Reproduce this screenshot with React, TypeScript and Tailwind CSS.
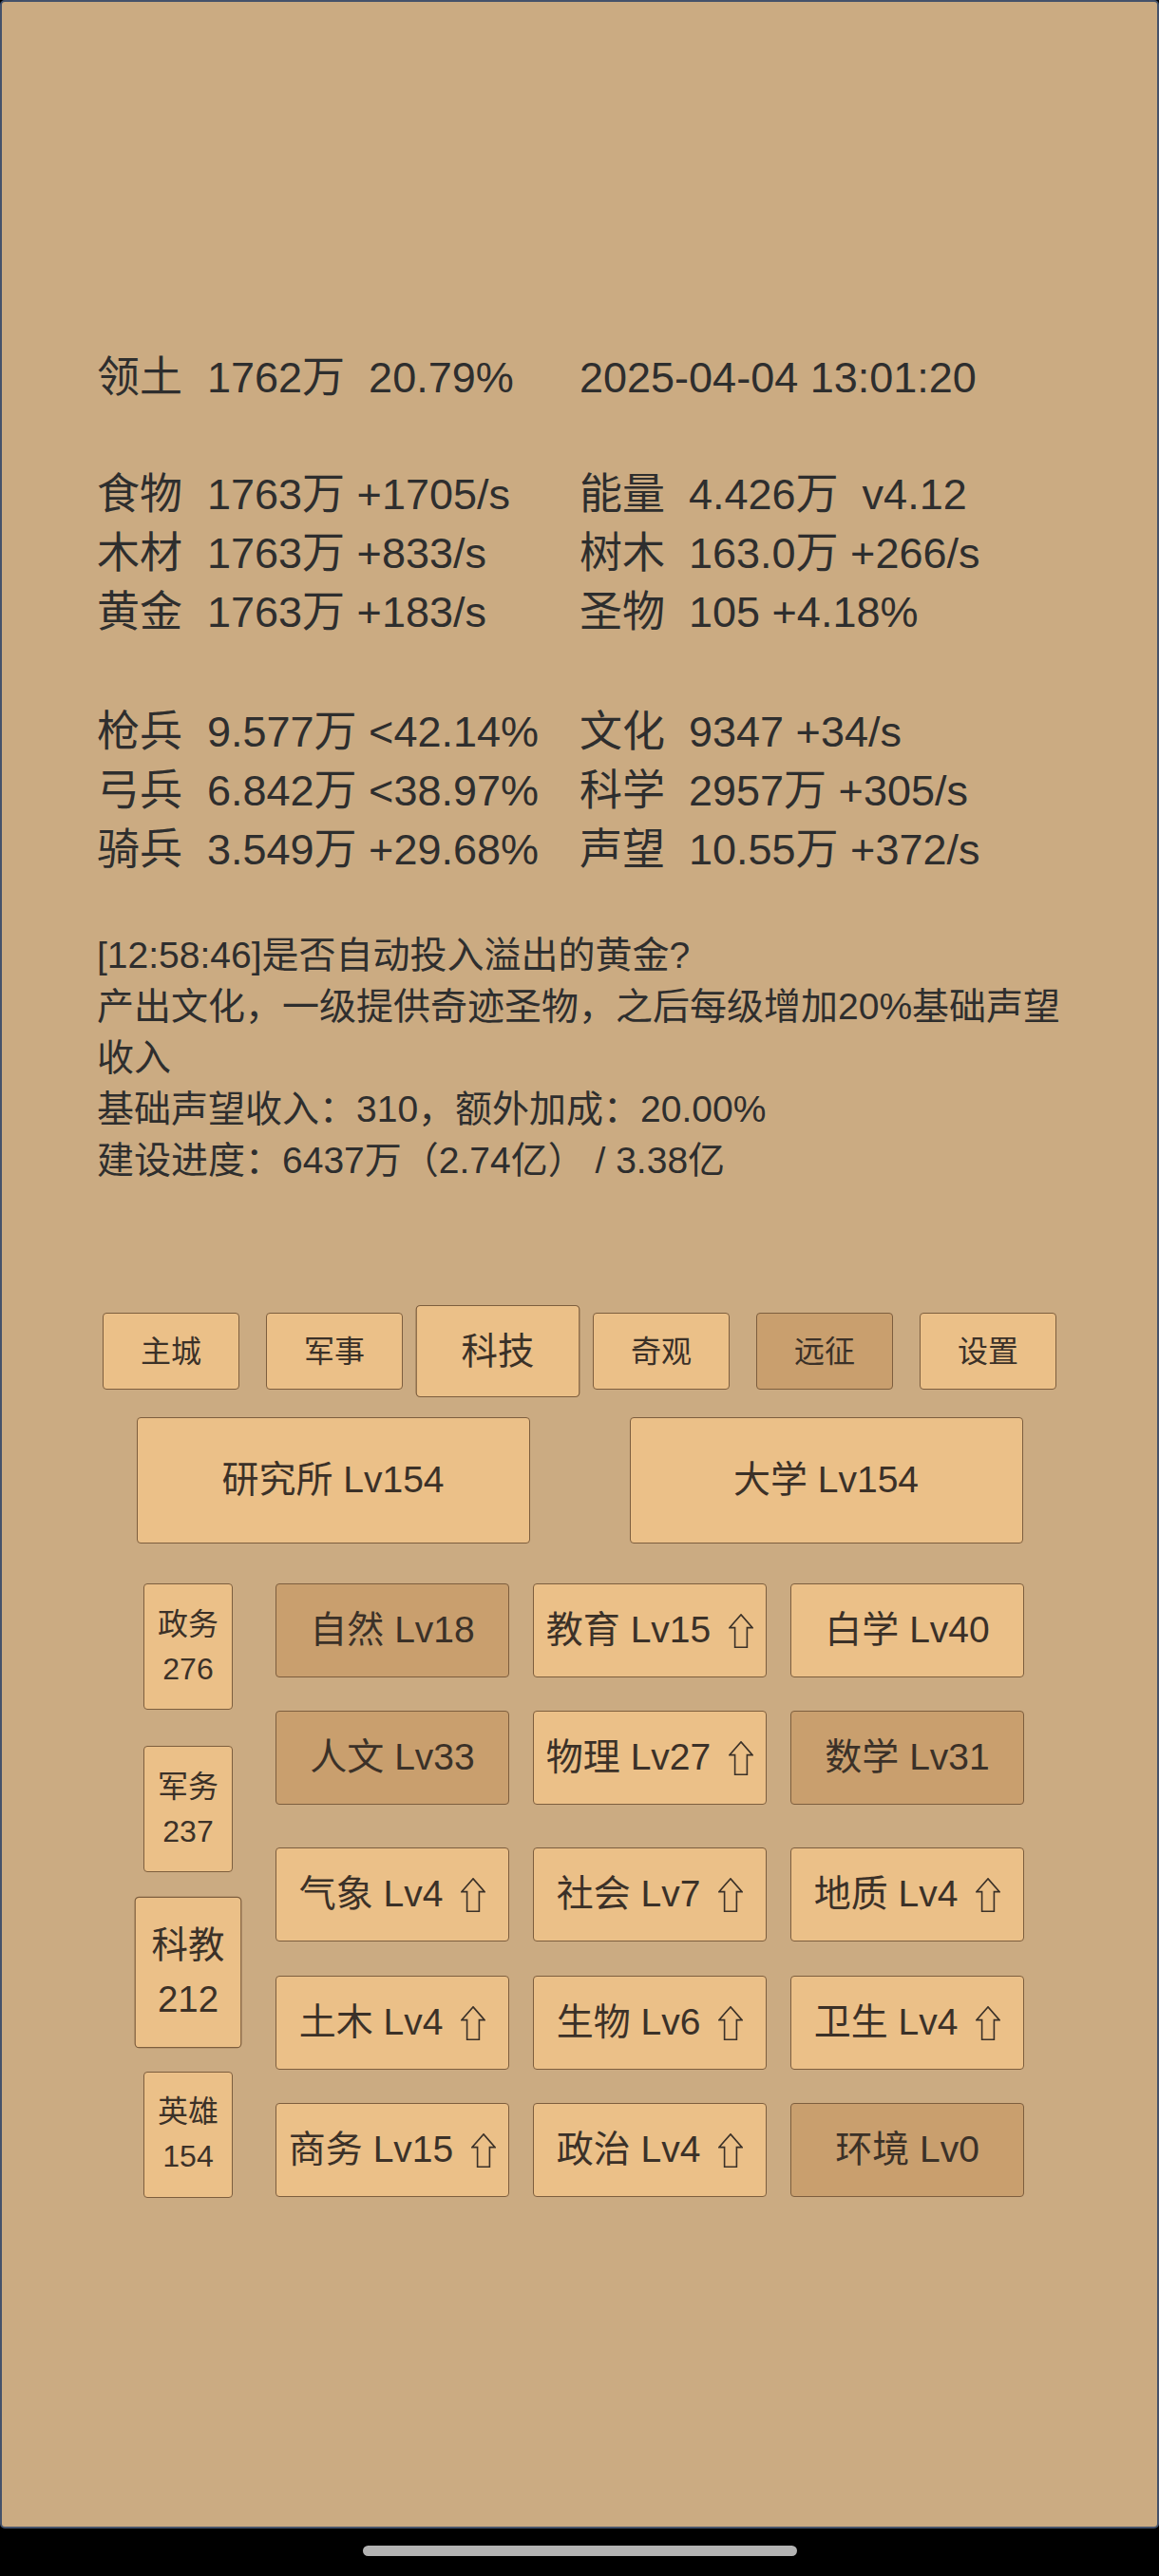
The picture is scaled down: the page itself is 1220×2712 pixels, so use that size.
import React from "react";

const Arrow = () => (
  <svg width="26" height="36" viewBox="0 0 26 36" className="ml-[19px] shrink-0">
    <polygon
      points="13,0.9 25.1,14.6 19.4,14.6 19.4,35.2 6.6,35.2 6.6,14.6 0.9,14.6"
      fill="none"
      stroke="#3b3128"
      strokeWidth="1.6"
      strokeLinejoin="miter"
    />
  </svg>
);

type Cell = { name: string; lv: string; up?: boolean; dark?: boolean };

const rows: Cell[][] = [
  [
    { name: "自然", lv: "Lv18", dark: true },
    { name: "教育", lv: "Lv15", up: true },
    { name: "白学", lv: "Lv40" },
  ],
  [
    { name: "人文", lv: "Lv33", dark: true },
    { name: "物理", lv: "Lv27", up: true },
    { name: "数学", lv: "Lv31", dark: true },
  ],
  [
    { name: "气象", lv: "Lv4", up: true },
    { name: "社会", lv: "Lv7", up: true },
    { name: "地质", lv: "Lv4", up: true },
  ],
  [
    { name: "土木", lv: "Lv4", up: true },
    { name: "生物", lv: "Lv6", up: true },
    { name: "卫生", lv: "Lv4", up: true },
  ],
  [
    { name: "商务", lv: "Lv15", up: true },
    { name: "政治", lv: "Lv4", up: true },
    { name: "环境", lv: "Lv0", dark: true },
  ],
];

const rowMargins = ["mt-0", "mt-[35px]", "mt-[45px]", "mt-[36px]", "mt-[35px]"];

const StatRow = ({ l, v, r, rv, cls }: { l: string; v: string; r: string; rv: string; cls?: string }) => (
  <div className={"flex h-[62px] leading-[62px] whitespace-pre " + (cls || "")}>
    <div className="flex w-[508px]">
      <span className="w-[116px]">{l}</span>
      <span>{v}</span>
    </div>
    <div className="flex">
      <span className="w-[115px]">{r}</span>
      <span>{rv}</span>
    </div>
  </div>
);

export default function App() {
  const btn = "border border-[#7d5e3e] rounded-[4px] text-[#3b3128]";
  const light = "bg-[#ebc088]";
  const dark = "bg-[#c99f6e]";
  return (
    <div className="w-[1220px] h-[2712px] bg-black flex flex-col font-['Liberation_Sans','Noto_Sans_CJK_SC',sans-serif]">
      <div className="h-[2662px] border-2 border-[#45526a] rounded-[5px] bg-[#cbab82] flex flex-col">
        {/* stats */}
        <div className="pt-[365px] pl-[100px] text-[45px] text-[#2e2e2e]">
          <div className="flex h-[62px] leading-[62px] whitespace-pre">
            <div className="flex w-[508px]">
              <span className="w-[116px]">领土</span>
              <span>{"1762万  20.79%"}</span>
            </div>
            <span>2025-04-04 13:01:20</span>
          </div>
          <StatRow cls="mt-[61px]" l="食物" v="1763万 +1705/s" r="能量" rv="4.426万  v4.12" />
          <StatRow l="木材" v="1763万 +833/s" r="树木" rv="163.0万 +266/s" />
          <StatRow l="黄金" v="1763万 +183/s" r="圣物" rv="105 +4.18%" />
          <StatRow cls="mt-[64px]" l="枪兵" v="9.577万 <42.14%" r="文化" rv="9347 +34/s" />
          <StatRow l="弓兵" v="6.842万 <38.97%" r="科学" rv="2957万 +305/s" />
          <StatRow l="骑兵" v="3.549万 +29.68%" r="声望" rv="10.55万 +372/s" />
        </div>

        {/* message */}
        <div className="mt-[53px] pl-[100px] text-[39px] leading-[54px] text-[#2e2e2e] whitespace-nowrap">
          <div>[12:58:46]是否自动投入溢出的黄金?</div>
          <div>产出文化，一级提供奇迹圣物，之后每级增加20%基础声望</div>
          <div>收入</div>
          <div>基础声望收入：310，额外加成：20.00%</div>
          <div>建设进度：6437万（2.74亿） / 3.38亿</div>
        </div>

        {/* tabs */}
        <div className="mt-[133px] flex justify-center gap-[28px]">
          {[
            { t: "主城" },
            { t: "军事" },
            { t: "科技", active: true },
            { t: "奇观" },
            { t: "远征", dark: true },
            { t: "设置" },
          ].map((b) => (
            <div
              key={b.t}
              className={
                "w-[144px] h-[81px] flex items-center justify-center text-[32px] " +
                btn +
                " " +
                (b.dark ? dark : light) +
                (b.active ? " scale-[1.2]" : "")
              }
            >
              {b.t}
            </div>
          ))}
        </div>

        {/* big buttons */}
        <div className="mt-[29px] flex justify-center gap-[105px]">
          <div className={"w-[414px] h-[133px] flex items-center justify-center text-[39px] " + btn + " " + light}>
            研究所 Lv154
          </div>
          <div className={"w-[414px] h-[133px] flex items-center justify-center text-[39px] " + btn + " " + light}>
            大学 Lv154
          </div>
        </div>

        {/* lower section */}
        <div className="mt-[42px] pl-[149px] flex gap-[45px]">
          <div className="w-[94px] h-[647px] flex flex-col justify-between">
            {[
              { a: "政务", b: "276" },
              { a: "军务", b: "237" },
              { a: "科教", b: "212", active: true },
              { a: "英雄", b: "154" },
            ].map((s) => (
              <div
                key={s.a}
                className={
                  "w-[94px] h-[133px] flex flex-col items-center justify-center text-[32px] leading-[47px] " +
                  btn +
                  " " +
                  light +
                  (s.active ? " scale-[1.2]" : "")
                }
              >
                <div>{s.a}</div>
                <div>{s.b}</div>
              </div>
            ))}
          </div>
          <div className="flex flex-col">
            {rows.map((row, i) => (
              <div key={i} className={"flex gap-[25px] " + rowMargins[i]}>
                {row.map((c) => (
                  <div
                    key={c.name}
                    className={
                      "w-[246px] h-[99px] flex items-center justify-center text-[39px] whitespace-pre " +
                      btn +
                      " " +
                      (c.dark ? dark : light)
                    }
                  >
                    <span>{c.name + " " + c.lv}</span>
                    {c.up && <Arrow />}
                  </div>
                ))}
              </div>
            ))}
          </div>
        </div>
      </div>
      <div className="flex justify-center pt-[18px]">
        <div className="w-[457px] h-[11px] rounded-full bg-[#b3b3b3]" />
      </div>
    </div>
  );
}
